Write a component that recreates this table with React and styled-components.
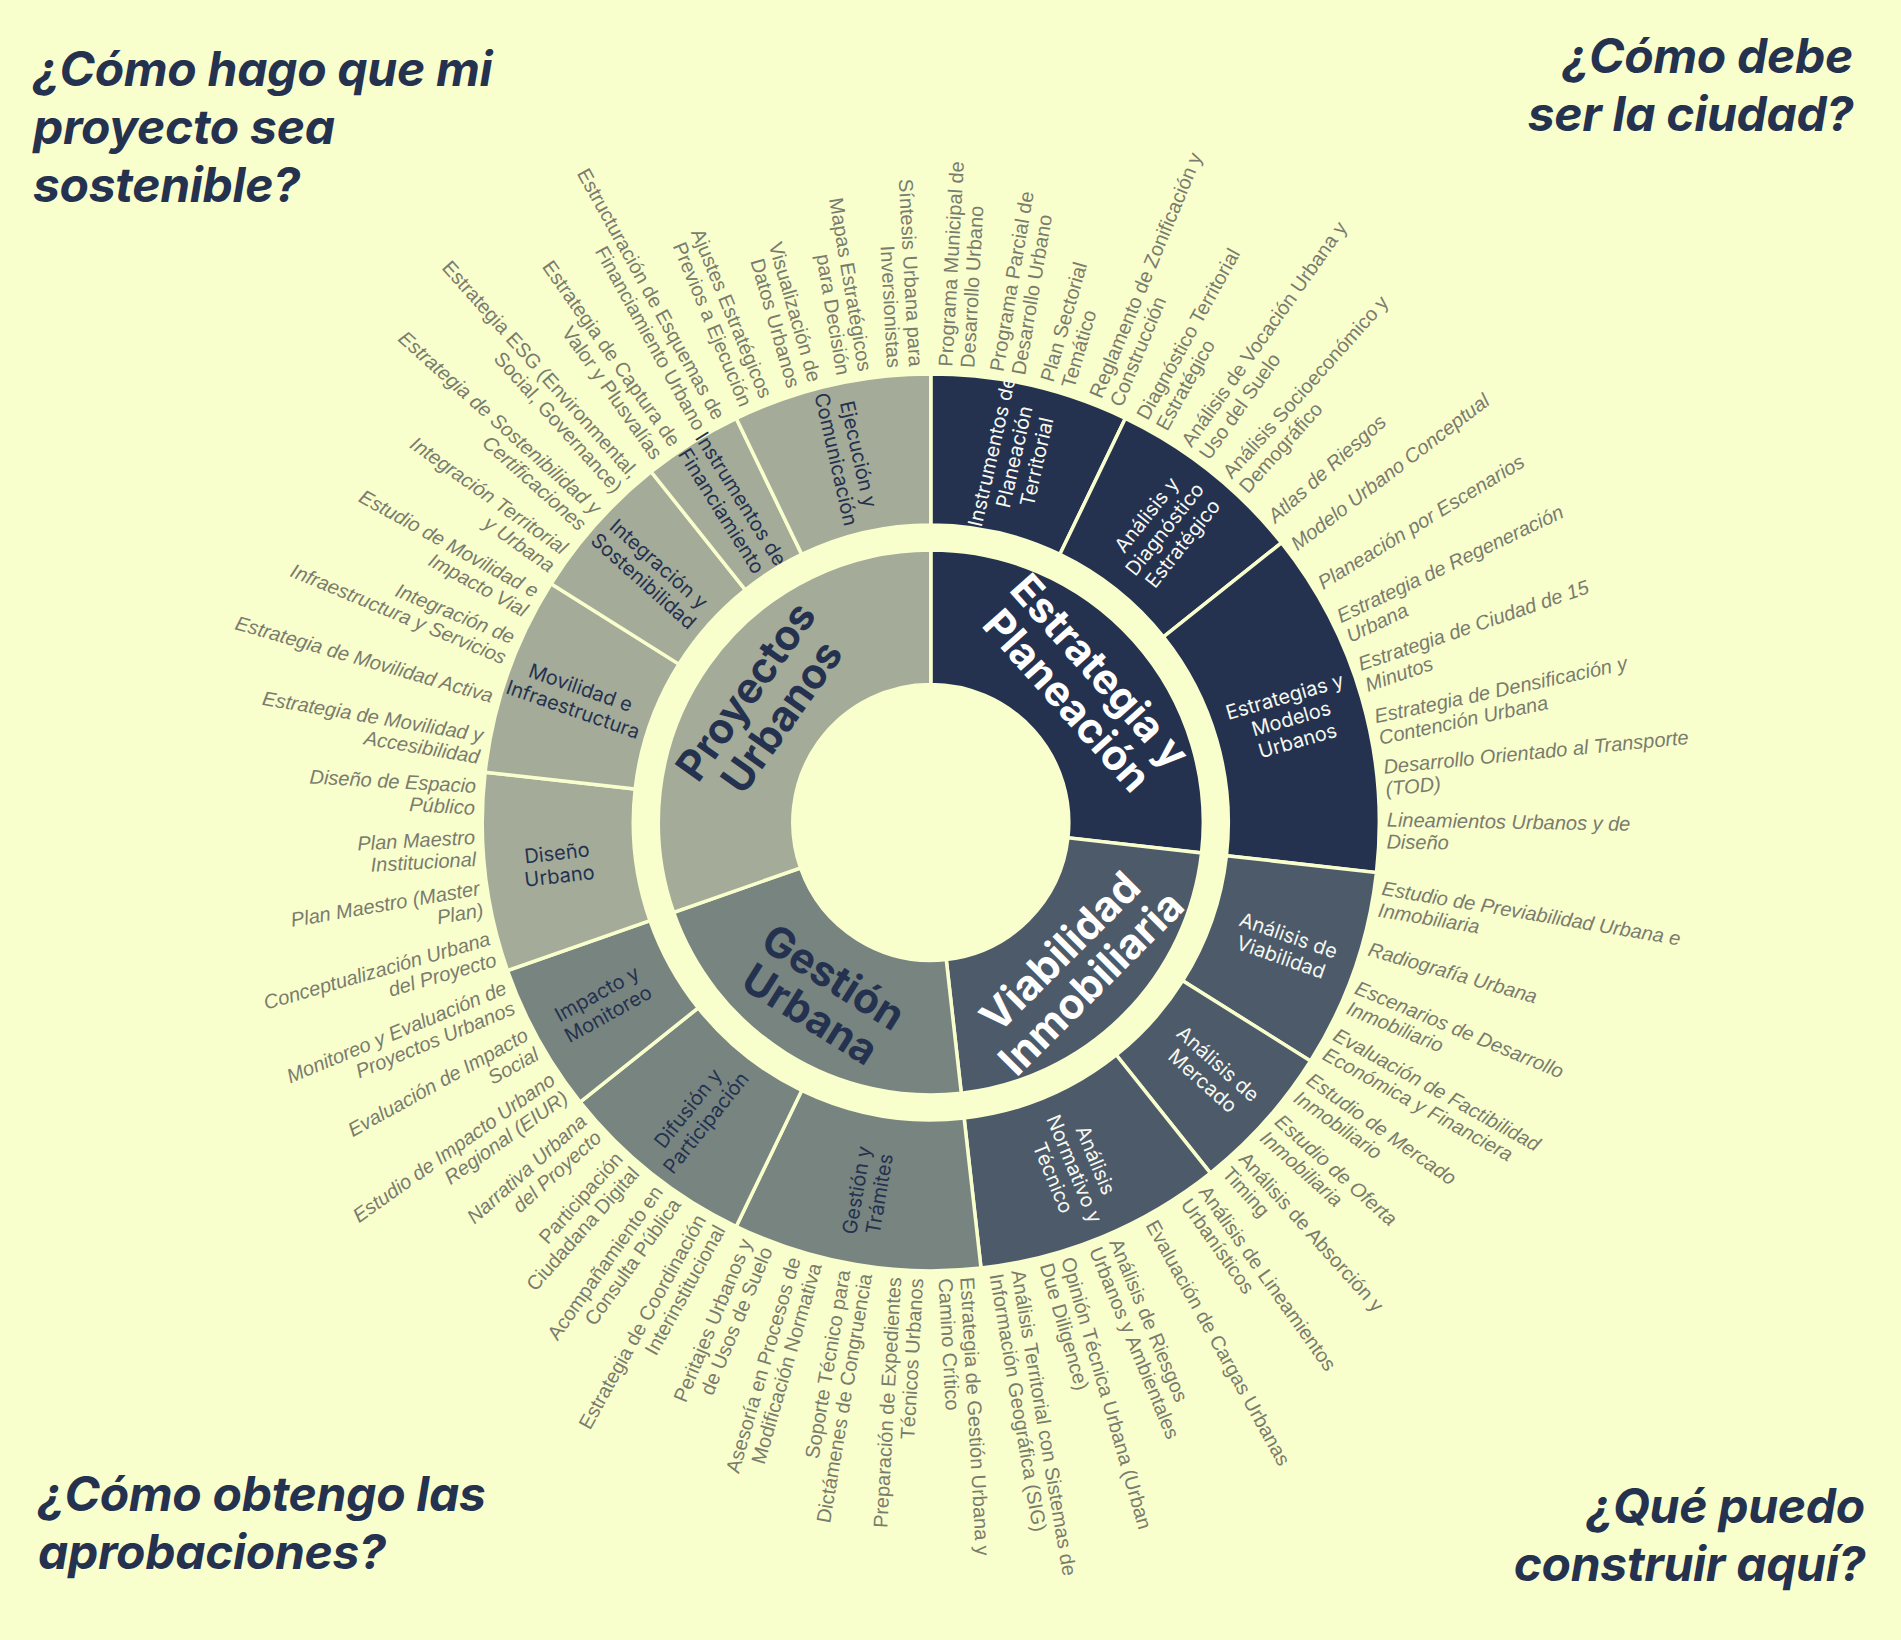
import React from 'react';
import styled, { createGlobalStyle } from 'styled-components';

const BG = '#f9fecd';
const NAVY = '#243250';
const LEAF_GRAY = '#7a7c6e';

const GlobalStyle = createGlobalStyle`
  html, body { margin: 0; padding: 0; background: ${BG}; }
  body { font-family: Inter, "Liberation Sans", sans-serif; }
`;

const Page = styled.main`
  width: 1901px;
  height: 1640px;
  display: grid;
  grid-template-columns: 1fr 1fr;
  grid-template-rows: 1fr 1fr;
  background: ${BG};
  overflow: hidden;
`;

const ChartArea = styled.svg`
  grid-area: 1 / 1 / 3 / 3;
  width: 1901px;
  height: 1640px;
  display: block;
`;

const Question = styled.h2`
  margin: 0;
  position: relative;
  z-index: 1;
  font-family: Inter, "Liberation Sans", sans-serif;
  font-weight: 700;
  font-style: italic;
  font-size: 48px;
  line-height: 58px;
  letter-spacing: -0.3px;
  color: ${NAVY};
  grid-row: ${(p) => p.$row};
  grid-column: ${(p) => p.$col};
  align-self: ${(p) => (p.$row === 1 ? 'start' : 'end')};
  justify-self: ${(p) => (p.$col === 1 ? 'start' : 'end')};
  text-align: ${(p) => (p.$col === 1 ? 'left' : 'right')};
  padding: ${(p) => p.$pad};
`;

const Sector = styled.path`
  fill: ${(p) => p.$fill};
  stroke: ${BG};
  stroke-width: 3.5;
  stroke-linejoin: miter;
`;

const Hole = styled.circle`
  fill: ${BG};
`;

const GroupLabel = styled.text`
  font-family: Inter, "Liberation Sans", sans-serif;
  font-weight: 700;
  font-size: 42px;
  fill: ${(p) => p.$color};
  text-anchor: middle;
`;

const SectionLabel = styled.text`
  font-family: Inter, "Liberation Sans", sans-serif;
  font-weight: 400;
  font-size: 20px;
  fill: ${(p) => p.$color};
  text-anchor: middle;
`;

const LeafLabel = styled.text`
  font-family: "Liberation Sans", Arial, sans-serif;
  font-size: 20px;
  font-style: ${(p) => (p.$italic ? 'italic' : 'normal')};
  fill: ${LEAF_GRAY};
  text-anchor: ${(p) => p.$anchor};
`;

const CX = 930.8;
const CY = 822.4;
const R_HOLE = 138;
const R_IN_OUT = 272.5;
const R_OUT_IN = 297.5;
const R_OUT_OUT = 448.5;
const R_LEAF = 456;

const WHITE = '#f6f8f0';

const groups = [
  {
    name: ['Estrategia y', 'Planeación'],
    fill: '#243250',
    text: '#ffffff',
    sub: WHITE,
    children: [
      {
        name: ['Instrumentos de', 'Planeación', 'Territorial'],
        leaves: [
          ['Programa Municipal de', 'Desarrollo Urbano'],
          ['Programa Parcial de', 'Desarrollo Urbano'],
          ['Plan Sectorial', 'Temático'],
          ['Reglamento de Zonificación y', 'Construcción'],
        ],
      },
      {
        name: ['Análisis y', 'Diagnóstico', 'Estratégico'],
        leaves: [
          ['Diagnóstico Territorial', 'Estratégico'],
          ['Análisis de Vocación Urbana y', 'Uso del Suelo'],
          ['Análisis Socioeconómico y', 'Demográfico'],
          ['Atlas de Riesgos'],
        ],
      },
      {
        name: ['Estrategias y', 'Modelos', 'Urbanos'],
        shift: [-2.0, -2.6, -2.9, -2.8, -2.4, -2.4, -2.2],
        leaves: [
          ['Modelo Urbano Conceptual'],
          ['Planeación por Escenarios'],
          ['Estrategia de Regeneración', 'Urbana'],
          ['Estrategia de Ciudad de 15', 'Minutos'],
          ['Estrategia de Densificación y', 'Contención Urbana'],
          ['Desarrollo Orientado al Transporte', '(TOD)'],
          ['Lineamientos Urbanos y de', 'Diseño'],
        ],
      },
    ],
  },
  {
    name: ['Viabilidad', 'Inmobiliaria'],
    fill: '#4c5a6a',
    text: '#ffffff',
    sub: WHITE,
    children: [
      {
        name: ['Análisis de', 'Viabilidad'],
        leaves: [
          ['Estudio de Previabilidad Urbana e', 'Inmobiliaria'],
          ['Radiografía Urbana'],
          ['Escenarios de Desarrollo', 'Inmobiliario'],
          ['Evaluación de Factibilidad', 'Económica y Financiera'],
        ],
      },
      {
        name: ['Análisis de', 'Mercado'],
        leaves: [
          ['Estudio de Mercado', 'Inmobiliario'],
          ['Estudio de Oferta', 'Inmobiliaria'],
          ['Análisis de Absorción y', 'Timing'],
        ],
      },
      {
        name: ['Análisis', 'Normativo y', 'Técnico'],
        leaves: [
          ['Análisis de Lineamientos', 'Urbanísticos'],
          ['Evaluación de Cargas Urbanas'],
          ['Análisis de Riesgos', 'Urbanos y Ambientales'],
          ['Opinión Técnica Urbana (Urban', 'Due Diligence)'],
          ['Análisis Territorial con Sistemas de', 'Información Geográfica (SIG)'],
        ],
      },
    ],
  },
  {
    name: ['Gestión', 'Urbana'],
    fill: '#78847f',
    text: NAVY,
    sub: NAVY,
    children: [
      {
        name: ['Gestión y', 'Trámites'],
        leaves: [
          ['Estrategia de Gestión Urbana y', 'Camino Crítico'],
          ['Preparación de Expedientes', 'Técnicos Urbanos'],
          ['Soporte Técnico para', 'Dictámenes de Congruencia'],
          ['Asesoría en Procesos de', 'Modificación Normativa'],
          ['Peritajes Urbanos y', 'de Usos de Suelo'],
        ],
      },
      {
        name: ['Difusión y', 'Participación'],
        leaves: [
          ['Estrategia de Coordinación', 'Interinstitucional'],
          ['Acompañamiento en', 'Consulta Pública'],
          ['Participación', 'Ciudadana Digital'],
          ['Narrativa Urbana', 'del Proyecto'],
        ],
      },
      {
        name: ['Impacto y', 'Monitoreo'],
        leaves: [
          ['Estudio de Impacto Urbano', 'Regional (EIUR)'],
          ['Evaluación de Impacto', 'Social'],
          ['Monitoreo y Evaluación de', 'Proyectos Urbanos'],
        ],
      },
    ],
  },
  {
    name: ['Proyectos', 'Urbanos'],
    fill: '#a4ab99',
    text: NAVY,
    sub: NAVY,
    children: [
      {
        name: ['Diseño', 'Urbano'],
        leaves: [
          ['Conceptualización Urbana', 'del Proyecto'],
          ['Plan Maestro (Master', 'Plan)'],
          ['Plan Maestro', 'Institucional'],
          ['Diseño de Espacio', 'Público'],
        ],
      },
      {
        name: ['Movilidad e', 'Infraestructura'],
        leaves: [
          ['Estrategia de Movilidad y', 'Accesibilidad'],
          ['Estrategia de Movilidad Activa'],
          ['Integración de', 'Infraestructura y Servicios'],
          ['Estudio de Movilidad e', 'Impacto Vial'],
        ],
      },
      {
        name: ['Integración y', 'Sostenibilidad'],
        leaves: [
          ['Integración Territorial', 'y Urbana'],
          ['Estrategia de Sostenibilidad y', 'Certificaciones'],
          ['Estrategia ESG (Environmental,', 'Social, Governance)'],
        ],
      },
      {
        name: ['Instrumentos de', 'Financiamiento'],
        leaves: [
          ['Estrategia de Captura de', 'Valor y Plusvalías'],
          ['Estructuración de Esquemas de', 'Financiamiento Urbano'],
        ],
      },
      {
        name: ['Ejecución y', 'Comunicación'],
        leaves: [
          ['Ajustes Estratégicos', 'Previos a Ejecución'],
          ['Visualización de', 'Datos Urbanos'],
          ['Mapas Estratégicos', 'para Decisión'],
          ['Síntesis Urbana para', 'Inversionistas'],
        ],
      },
    ],
  },
];

const pt = (r, a) => {
  const t = (a * Math.PI) / 180;
  return [CX + r * Math.sin(t), CY - r * Math.cos(t)];
};

const arcPath = (r0, r1, a0, a1) => {
  const large = a1 - a0 > 180 ? 1 : 0;
  const [x0, y0] = pt(r1, a0);
  const [x1, y1] = pt(r1, a1);
  const [x2, y2] = pt(r0, a1);
  const [x3, y3] = pt(r0, a0);
  return `M${x0} ${y0}A${r1} ${r1} 0 ${large} 1 ${x1} ${y1}L${x2} ${y2}A${r0} ${r0} 0 ${large} 0 ${x3} ${y3}Z`;
};

const Lines = ({ lines, lh, fs }) => {
  const n = lines.length;
  return lines.map((l, i) => (
    <tspan key={i} x={0} y={(i - (n - 1) / 2) * lh + 0.35 * fs}>
      {l}
    </tspan>
  ));
};

function buildLayout() {
  const total = groups.reduce(
    (s, g) => s + g.children.reduce((t, c) => t + c.leaves.length, 0),
    0
  );
  const step = 360 / total;
  let a = 0;
  const inner = [];
  const outer = [];
  const leaves = [];
  groups.forEach((g, gi) => {
    const gStart = a;
    g.children.forEach((c, ci) => {
      const cStart = a;
      c.leaves.forEach((lf, li) => {
        const shift = c.shift ? c.shift[li] : 0;
        leaves.push({ key: `${gi}-${ci}-${li}`, lines: lf, mid: a + step / 2 + shift });
        a += step;
      });
      outer.push({ key: `${gi}-${ci}`, g, c, a0: cStart, a1: a });
    });
    inner.push({ key: `${gi}`, g, a0: gStart, a1: a });
  });
  return { inner, outer, leaves };
}

const layout = buildLayout();

function Sunburst() {
  const { inner, outer, leaves } = layout;
  return (
    <ChartArea viewBox="0 0 1901 1640" aria-label="Mapa de servicios urbanos">
      {inner.map((s) => (
        <Sector key={`i${s.key}`} $fill={s.g.fill} d={arcPath(R_HOLE, R_IN_OUT, s.a0, s.a1)} />
      ))}
      {outer.map((s) => (
        <Sector key={`o${s.key}`} $fill={s.g.fill} d={arcPath(R_OUT_IN, R_OUT_OUT, s.a0, s.a1)} />
      ))}
      <Hole cx={CX} cy={CY} r={R_HOLE - 0.5} />
      {inner.map((s) => {
        const mid = (s.a0 + s.a1) / 2;
        const [x, y] = pt((138.5 + 271) / 2, mid);
        const rot = mid > 90 && mid < 270 ? mid - 180 : mid;
        return (
          <GroupLabel key={`gl${s.key}`} $color={s.g.text} transform={`translate(${x} ${y}) rotate(${rot})`}>
            <Lines lines={s.g.name} lh={44} fs={42} />
          </GroupLabel>
        );
      })}
      {outer.map((s) => {
        const mid = (s.a0 + s.a1) / 2;
        const [x, y] = pt(375, mid);
        const rot = mid < 180 ? mid - 90 : mid - 270;
        return (
          <SectionLabel key={`sl${s.key}`} $color={s.g.sub} transform={`translate(${x} ${y}) rotate(${rot})`}>
            <Lines lines={s.c.name} lh={23} fs={20} />
          </SectionLabel>
        );
      })}
      {leaves.map((l) => {
        const [x, y] = pt(R_LEAF, l.mid);
        const right = l.mid < 180;
        const rot = right ? l.mid - 90 : l.mid - 270;
        return (
          <LeafLabel
            key={`ll${l.key}`}
            $anchor={right ? 'start' : 'end'}
            $italic={Math.abs(rot) < 45}
            transform={`translate(${x} ${y}) rotate(${rot})`}
          >
            <Lines lines={l.lines} lh={22} fs={20} />
          </LeafLabel>
        );
      })}
    </ChartArea>
  );
}

export default function App() {
  return (
    <>
      <GlobalStyle />
      <Page>
        <Sunburst />
        <Question $row={1} $col={1} $pad="40px 0 0 33px">
          ¿Cómo hago que mi
          <br />
          proyecto sea
          <br />
          sostenible?
        </Question>
        <Question $row={1} $col={2} $pad="27px 48px 0 0">
          ¿Cómo debe
          <br />
          ser la ciudad?
        </Question>
        <Question $row={2} $col={1} $pad="0 0 59px 38px">
          ¿Cómo obtengo las
          <br />
          aprobaciones?
        </Question>
        <Question $row={2} $col={2} $pad="0 36px 47px 0">
          ¿Qué puedo
          <br />
          construir aquí?
        </Question>
      </Page>
    </>
  );
}
